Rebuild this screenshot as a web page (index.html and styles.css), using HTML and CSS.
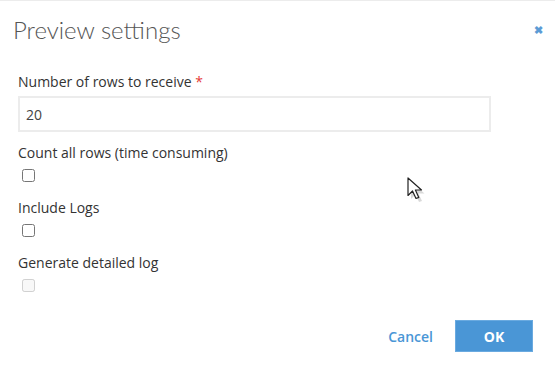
FILE: index.html
```html
<!DOCTYPE html>
<html lang="en">
<head>
    <meta charset="UTF-8">
    <title>Preview settings</title>
    <link rel="stylesheet" href="styles.css">
</head>
<body>
    <div class="dialog">
        <div class="dialog-header">
            <h2 class="dialog-title">Preview settings</h2>
            <span class="close">&#10006;</span>
        </div>
        <div class="dialog-body">
            <div class="field">
                <label class="field-label">Number of rows to receive <span class="required">*</span></label>
                <input type="text" class="text-input" value="20">
            </div>
            <div class="field">
                <label class="field-label">Count all rows (time consuming)</label>
                <input type="checkbox" class="check">
            </div>
            <div class="field">
                <label class="field-label">Include Logs</label>
                <input type="checkbox" class="check">
            </div>
            <div class="field">
                <label class="field-label">Generate detailed log</label>
                <input type="checkbox" class="check" disabled>
            </div>
        </div>
        <div class="dialog-footer">
            <button class="btn-link">Cancel</button>
            <button class="btn-primary">OK</button>
        </div>
        <svg class="cursor" width="18" height="26" viewBox="0 0 18 26">
            <path d="M2.5 3.5 L2.5 21 L7 16.5 L10.5 24 L13.5 23 L10 15.5 L16 15.5 Z" fill="rgba(0,0,0,0.15)" transform="translate(1.5,1)"/>
            <path d="M1 1 L1 18.5 L5.5 14 L9 21.5 L11.8 20.4 L8.4 13 L14.5 13 Z" fill="#fff" stroke="#222" stroke-width="1.2" stroke-linejoin="round"/>
        </svg>
    </div>
</body>
</html>
```

FILE: styles.css
```css
* {
    margin: 0;
    padding: 0;
    box-sizing: border-box;
}
body {
    font-family: 'Open Sans', sans-serif;
    background: #fff;
    color: #333;
}
.dialog {
    position: relative;
    width: 555px;
    height: 368px;
    border-top: 1px solid #ececec;
}
.dialog-header {
    display: flex;
    justify-content: space-between;
    align-items: center;
    padding: 0 12px 0 13px;
    height: 56px;
}
.dialog-title {
    font-family: 'Lato', sans-serif;
    font-weight: 300;
    font-size: 24px;
    color: #555;
}
.close {
    font-size: 11px;
    color: #5b9bd5;
    font-weight: bold;
    cursor: pointer;
}
.dialog-body {
    padding: 16px 64px 0 18px;
}
.field {
    display: flex;
    flex-direction: column;
    align-items: flex-start;
    margin-bottom: 12px;
}
.field-label {
    font-size: 14px;
    font-weight: 500;
    color: #333;
    line-height: 18px;
    margin-bottom: 5px;
}
.required {
    color: #e53935;
}
.text-input {
    width: 100%;
    height: 36px;
    border: 2px solid #ececec;
    padding: 0 6px;
    font-family: 'Open Sans', sans-serif;
    font-size: 14px;
    color: #444;
    outline: none;
}
.check {
    width: 13px;
    height: 13px;
    margin: 2px 0 5px 4px;
}
.dialog-footer {
    display: flex;
    justify-content: flex-end;
    align-items: center;
    gap: 22px;
    padding: 11px 22px 0 0;
}
.btn-link {
    background: none;
    border: none;
    font-family: 'Open Sans', sans-serif;
    font-size: 14px;
    font-weight: 600;
    color: #4a96d6;
    cursor: pointer;
}
.btn-primary {
    width: 78px;
    height: 32px;
    background: #4a96d6;
    border: 1px solid #6aaae0;
    color: #fff;
    font-family: 'Open Sans', sans-serif;
    font-size: 14px;
    font-weight: 700;
    cursor: pointer;
}
.cursor {
    position: absolute;
    left: 407px;
    top: 176px;
}
```
